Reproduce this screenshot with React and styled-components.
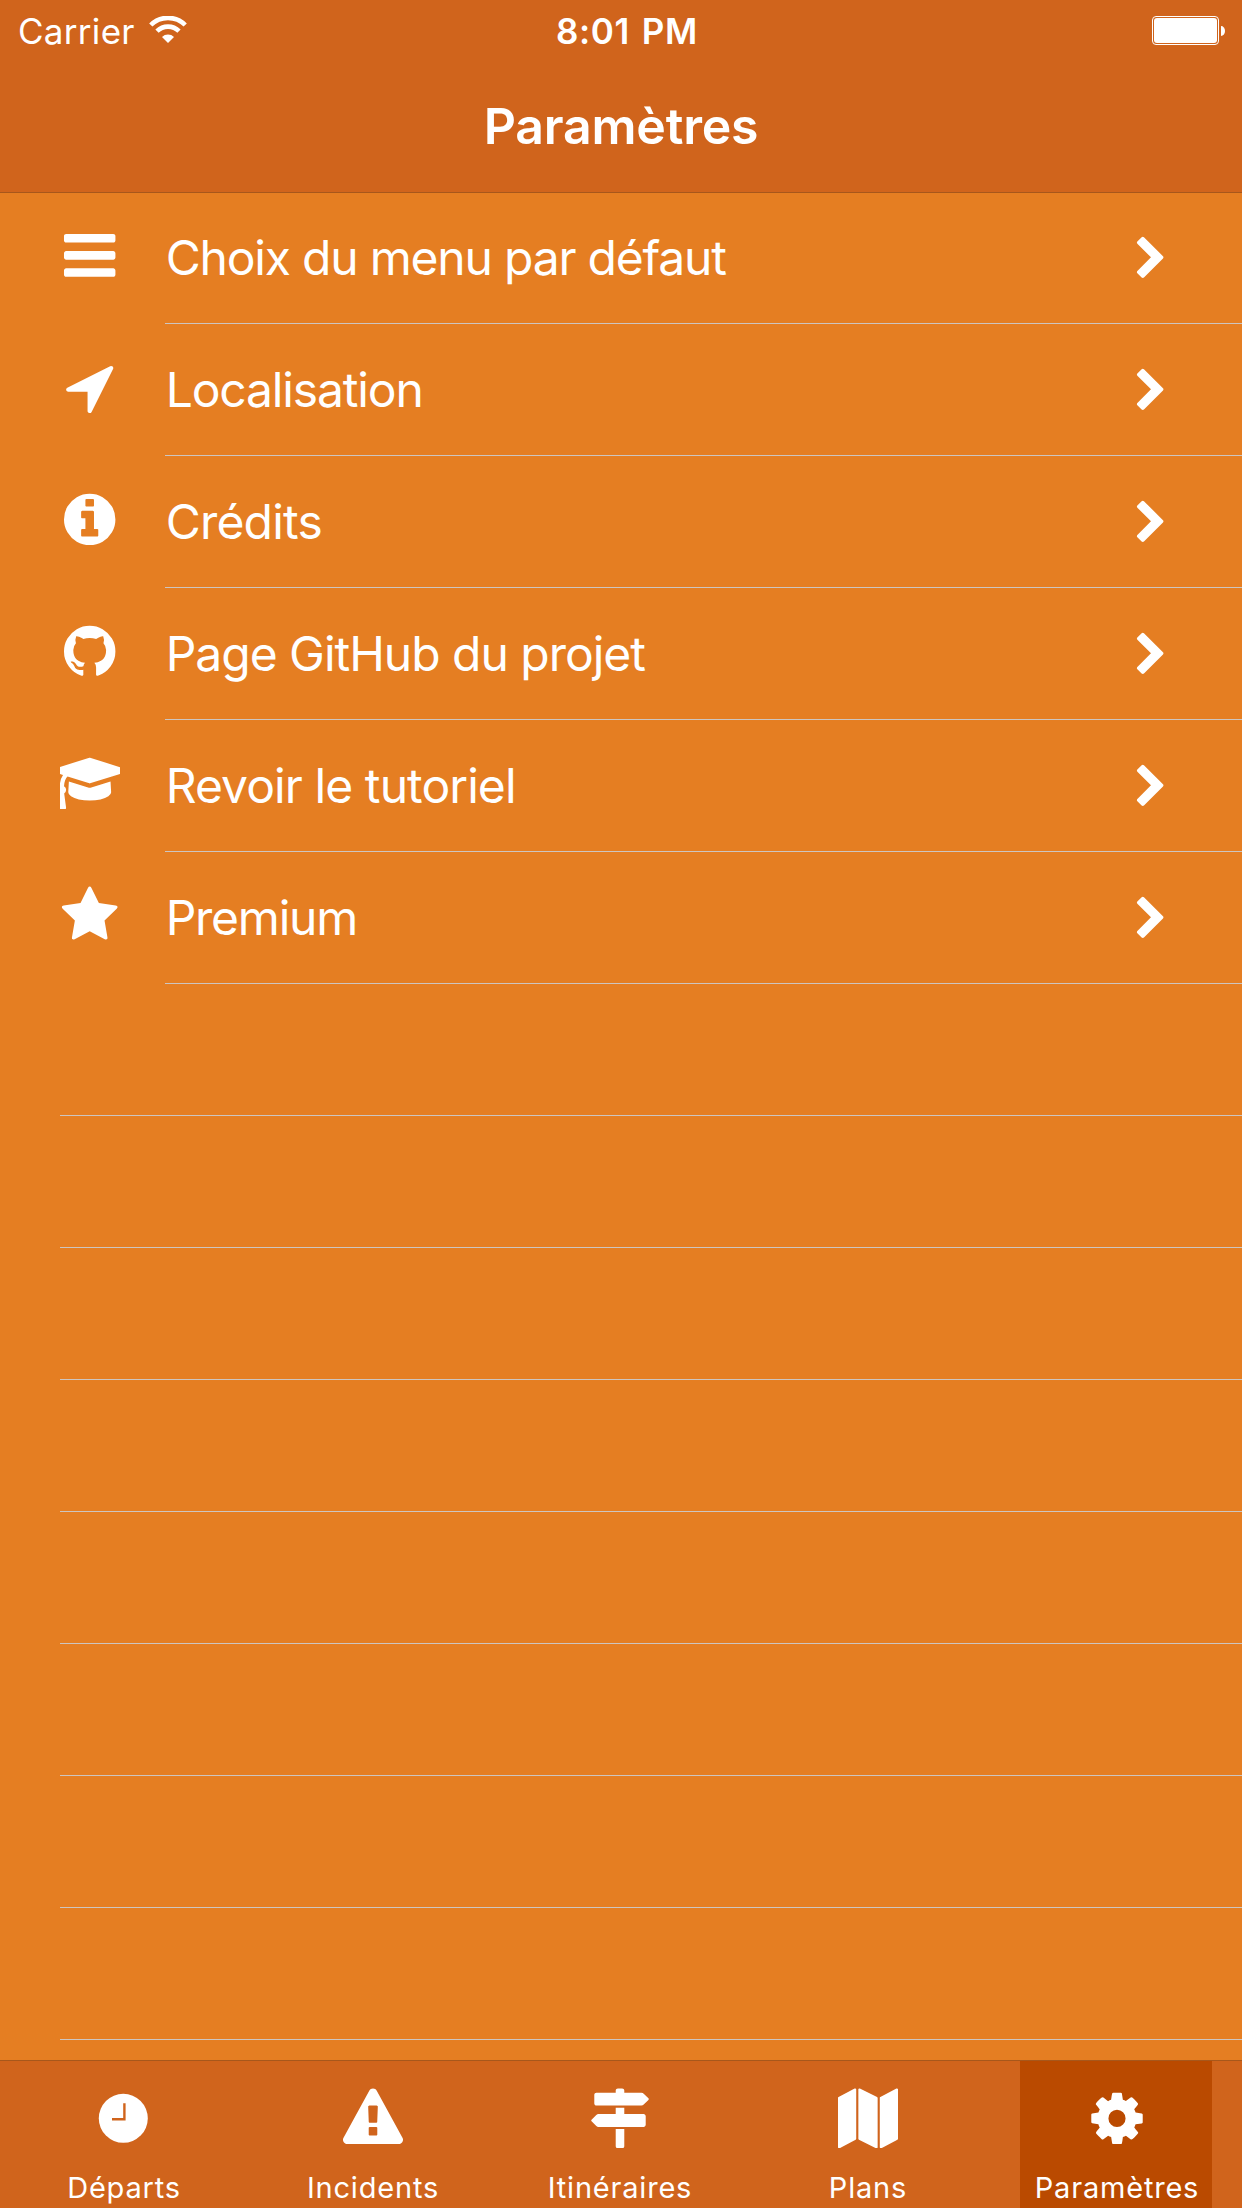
import React from "react";
import styled, { createGlobalStyle } from "styled-components";

const GlobalStyle = createGlobalStyle`
  * { box-sizing: border-box; }
  html, body { margin: 0; padding: 0; background: #e57e22; }
  body { overflow: hidden; }
`;

const Screen = styled.div`
  display: flex;
  flex-direction: column;
  width: 1242px;
  height: 2208px;
  overflow: hidden;
  background: #e57e22;
  color: #fff;
  font-family: Inter, "Liberation Sans", sans-serif;
  white-space: nowrap;
`;

const Header = styled.header`
  flex: none;
  height: 193px;
  background: #d0641c;
  border-bottom: 1px solid #a7571b;
`;

const StatusBar = styled.div`
  display: grid;
  grid-template-columns: 1fr auto 1fr;
  align-items: center;
  height: 60px;
  padding: 2px 17px 0 18px;
`;

const Network = styled.div`
  display: flex;
  align-items: center;
  gap: 14.5px;
  font-size: 35px;
  letter-spacing: 0.3px;

  svg {
    margin-top: -3px;
  }
`;

const Time = styled.div`
  padding-left: 11px;
  font-size: 35px;
  font-weight: 600;
  letter-spacing: 0.6px;
  word-spacing: 2.5px;
`;

const Battery = styled.div`
  display: flex;
  align-items: center;
  align-self: start;
  justify-content: flex-end;
  gap: 2px;
  margin-top: 14px;
`;

const BatteryShell = styled.div`
  width: 67px;
  height: 29px;
  padding: 1px;
  border: 1px solid #fff;
  border-radius: 4px;
`;

const BatteryLevel = styled.div`
  height: 100%;
  background: #fff;
  border-radius: 3px;
`;

const BatteryTip = styled.div`
  width: 4px;
  height: 10px;
  background: #fff;
  border-radius: 0 4px 4px 0 / 0 5px 5px 0;
`;

const Title = styled.h1`
  display: flex;
  align-items: center;
  justify-content: center;
  height: 132px;
  margin: 0;
  padding-left: 0;
  font-size: 50px;
  font-weight: 600;
  letter-spacing: -0.2px;
`;

const List = styled.main`
  flex: 1;
  min-height: 0;
  margin-top: -1px;
  padding-left: 60px;
  overflow: hidden;
  clip-path: inset(1px 0 0 0);
`;

const Row = styled.div`
  display: flex;
  height: 132px;
`;

const RowIcon = styled.div`
  flex: none;
  width: 105px;
  padding-top: 33px;
  line-height: 0;
`;

const RowBody = styled.div`
  flex: 1;
  display: flex;
  align-items: center;
  justify-content: space-between;
  padding-right: 68px;
  border-bottom: 1px solid #cdc5c0;

  svg {
    margin-top: 3px;
  }
`;

const RowLabel = styled.span`
  padding-left: 0.7px;
  font-size: 48px;
  letter-spacing: ${(p) => p.$spacing}px;
`;

const EmptyRow = styled.div`
  height: 132px;
  border-bottom: 1px solid #cdc5c0;
`;

const TabBar = styled.nav`
  flex: none;
  display: flex;
  gap: 56px;
  height: 148px;
  padding-left: 28px;
  background: #d0641c;
  border-top: 1px solid #a7571b;
`;

const Tab = styled.div`
  display: flex;
  flex-direction: column;
  align-items: center;
  width: 192px;
  padding-top: 27px;
  background: ${(p) => (p.$active ? "#ba4a00" : "transparent")};

  svg {
    flex: none;
    margin-left: ${(p) => p.$shift || 0}px;
  }
`;

const TabLabel = styled.span`
  margin-top: 22px;
  padding-left: ${(p) => p.$shift || 0}px;
  font-size: 29px;
  line-height: 36px;
  letter-spacing: ${(p) => p.$spacing}px;
`;

const PATHS = {
  bars: "M1664 1344v128q0 26-19 45t-45 19h-1408q-26 0-45-19t-19-45v-128q0-26 19-45t45-19h1408q26 0 45 19t19 45zm0-512v128q0 26-19 45t-45 19h-1408q-26 0-45-19t-19-45v-128q0-26 19-45t45-19h1408q26 0 45 19t19 45zm0-512v128q0 26-19 45t-45 19h-1408q-26 0-45-19t-19-45v-128q0-26 19-45t45-19h1408q26 0 45 19t19 45z",
  arrow: "M1593 349l-640 1280q-17 35-57 35-5 0-15-2-22-5-35.5-22.5t-13.5-39.5v-576h-576q-22 0-39.5-13.5t-22.5-35.5 4-42 29-30l1280-640q13-7 29-7 27 0 45 19 15 14 18.5 34.5t-6.5 39.5z",
  info: "M1152 1376v-160q0-14-9-23t-23-9h-96v-512q0-14-9-23t-23-9h-320q-14 0-23 9t-9 23v160q0 14 9 23t23 9h96v320h-96q-14 0-23 9t-9 23v160q0 14 9 23t23 9h448q14 0 23-9t9-23zm-128-896v-160q0-14-9-23t-23-9h-192q-14 0-23 9t-9 23v160q0 14 9 23t23 9h192q14 0 23-9t9-23zm640 416q0 209-103 385.5t-279.5 279.5-385.5 103-385.5-103-279.5-279.5-103-385.5 103-385.5 279.5-279.5 385.5-103 385.5 103 279.5 279.5 103 385.5z",
  github: "M896 128q209 0 385.5 103t279.5 279.5 103 385.5q0 251-146.5 451.5t-378.5 277.5q-27 5-40-7t-13-30q0-3 .5-76.5t.5-134.5q0-97-52-142 57-6 102.5-18t94-39 81-66.5 53-105 20.5-150.5q0-119-79-206 37-91-8-204-28-9-81 11t-92 44l-38 24q-93-26-192-26t-192 26q-16-11-42.5-27t-83.5-38.5-85-13.5q-45 113-8 204-79 87-79 206 0 85 20.5 150t52.5 105 80.5 67 94 39 102.5 18q-39 36-49 103-21 10-45 15t-57 5-65.5-21.5-55.5-62.5q-19-32-48.5-52t-49.5-24l-20-3q-21 0-29 4.5t-5 11.5 9 14 13 12l7 5q22 10 43.5 38t31.5 51l10 23q13 38 44 61.5t67 30 69.5 7 55.5-3.5l23-4q0 38 .5 88.5t.5 54.5q0 18-13 30t-40 7q-232-77-378.5-277.5t-146.5-451.5q0-209 103-385.5t279.5-279.5 385.5-103z",
  cap: "M1774 836l18 316q4 69-82 128t-235 93.5-323 34.5-323-34.5-235-93.5-82-128l18-316 574 181q22 7 48 7t48-7zm530-324q0 23-22 31l-1120 352q-4 1-10 1t-10-1l-652-206q-43 34-71 111.5t-34 178.5q63 36 63 109 0 69-58 107l58 433q2 14-8 25-9 11-24 11h-192q-15 0-24-11-10-11-8-25l58-433q-58-38-58-107 0-73 65-111 11-207 98-330l-333-104q-22-8-22-31t22-31l1120-352q4-1 10-1t10 1l1120 352q22 8 22 31z",
  star: "M1728 647q0 22-26 48l-363 354 86 500q1 7 1 20 0 21-10.5 35.5t-30.5 14.5q-19 0-40-12l-449-236-449 236q-22 12-40 12-21 0-31.5-14.5t-10.5-35.5q0-6 2-20l86-500-364-354q-25-27-25-48 0-37 56-46l502-73 225-455q19-41 49-41t49 41l225 455 502 73q56 9 56 46z",
  chevron: "M1363 877l-742 742q-19 19-45 19t-45-19l-166-166q-19-19-19-45t19-45l531-531-531-531q-19-19-19-45t19-45l166-166q19-19 45-19t45 19l742 742q19 19 19 45t-19 45z",
  warning: "M1024 1375v-190q0-14-9.5-23.5t-22.5-9.5h-192q-13 0-22.5 9.5t-9.5 23.5v190q0 14 9.5 23.5t22.5 9.5h192q13 0 22.5-9.5t9.5-23.5zm-2-374l18-459q0-12-10-19-13-11-24-11h-220q-11 0-24 11-10 7-10 21l17 457q0 10 10 16.5t24 6.5h185q14 0 23.5-6.5t10.5-16.5zm-14-934l768 1408q35 63-2 126-17 29-46.5 46t-63.5 17h-1536q-34 0-63.5-17t-46.5-46q-37-63-2-126l768-1408q17-31 47-49t65-18 65 18 47 49z",
  signs: "M1745 297q10 10 10 23t-10 23l-141 141q-28 28-68 28h-1344q-26 0-45-19t-19-45v-256q0-26 19-45t45-19h576v-64q0-26 19-45t45-19h128q26 0 45 19t19 45v64h512q40 0 68 28zm-977 919h256v512q0 26-19 45t-45 19h-128q-26 0-45-19t-19-45v-512zm832-448q26 0 45 19t19 45v256q0 26-19 45t-45 19h-1344q-40 0-68-28l-141-141q-10-10-10-23t10-23l141-141q28-28 68-28h512v-192h256v192h576z",
  map: "M512 0q13 0 22.5 9.5t9.5 22.5v1472q0 20-17 28l-480 256q-7 4-15 4-13 0-22.5-9.5t-9.5-22.5v-1472q0-20 17-28l480-256q7-4 15-4zm1248 0q13 0 22.5 9.5t9.5 22.5v1472q0 20-17 28l-480 256q-7 4-15 4-13 0-22.5-9.5t-9.5-22.5v-1472q0-20 17-28l480-256q7-4 15-4zm-1120 0q8 0 14 3l512 256q18 10 18 29v1472q0 13-9.5 22.5t-22.5 9.5q-8 0-14-3l-512-256q-18-10-18-29v-1472q0-13 9.5-22.5t22.5-9.5z",
  cog: "M1152 896q0-106-75-181t-181-75-181 75-75 181 75 181 181 75 181-75 75-181zm512-109v222q0 12-8 23t-20 13l-185 28q-19 54-39 91 35 50 107 138 10 12 10 25t-9 23q-27 37-99 108t-94 71q-12 0-26-9l-138-108q-44 23-91 38-16 136-29 186-7 28-36 28h-222q-14 0-24.5-8.5t-11.5-21.5l-28-184q-49-16-90-37l-141 107q-10 9-25 9-14 0-25-11-126-114-165-168-7-10-7-23 0-12 8-23 15-21 51-66.5t54-70.5q-27-50-41-99l-183-27q-13-2-21-12.5t-8-23.5v-222q0-12 8-23t19-13l186-28q14-46 39-92-40-57-107-138-10-12-10-24 0-10 9-23 26-36 98.5-107.5t94.5-71.5q13 0 26 10l138 107q44-23 91-38 16-136 29-186 7-28 36-28h222q14 0 24.5 8.5t11.5 21.5l28 184q49 16 90 37l142-107q9-9 24-9 13 0 25 10 129 119 165 170 7 8 7 22 0 12-8 23-15 21-51 66.5t-54 70.5q26 50 41 98l183 28q13 2 21 12.5t8 23.5z",
};

function Glyph({ name, size = 60, x = 0, y = -12 }) {
  const left = name === "cap" ? x + 256 : x;
  return (
    <svg
      width={size}
      height={size}
      viewBox={`${left} ${y} 1792 1792`}
      fill="#fff"
    >
      <path d={PATHS[name]} />
    </svg>
  );
}

function ClockIcon() {
  return (
    <svg width="60" height="60" viewBox="0 0 60 60">
      <circle cx="29.3" cy="30.3" r="24.5" fill="#fff" />
      <path d="M30.4 15.3v16H18" fill="none" stroke="#d0641c" strokeWidth="2.4" />
    </svg>
  );
}

function WifiIcon() {
  return (
    <svg width="38" height="28" viewBox="0 0 38 28">
      <g fill="none" stroke="#fff" strokeWidth="4.6">
        <path d="M1.8 9A24.3 24.3 0 0 1 36.2 9" />
        <path d="M8 15.2A15.5 15.5 0 0 1 30 15.2" />
      </g>
      <path d="M13 21A8.5 8.5 0 0 1 25 21L19 27Z" fill="#fff" />
    </svg>
  );
}

const ROWS = [
  { icon: "bars", label: "Choix du menu par défaut", spacing: -1.2 },
  { icon: "arrow", label: "Localisation", spacing: -1.15 },
  { icon: "info", label: "Crédits", spacing: -0.8 },
  { icon: "github", label: "Page GitHub du projet", spacing: -1.02 },
  { icon: "cap", label: "Revoir le tutoriel", spacing: -0.92 },
  { icon: "star", label: "Premium", spacing: -1.25 },
];

const TABS = [
  { icon: "clock", label: "Départs", spacing: 0.8 },
  { icon: "warning", label: "Incidents", spacing: 0.8, shift: 2 },
  { icon: "signs", label: "Itinéraires", spacing: 0.8 },
  { icon: "map", label: "Plans", spacing: 0.8 },
  { icon: "cog", label: "Paramètres", spacing: 0.8, shift: 2, active: true },
];

const EMPTY_ROWS = 8;

export default function App() {
  return (
    <>
      <GlobalStyle />
      <Screen>
        <Header>
          <StatusBar>
            <Network>
              Carrier
              <WifiIcon />
            </Network>
            <Time>8:01 PM</Time>
            <Battery>
              <BatteryShell>
                <BatteryLevel />
              </BatteryShell>
              <BatteryTip />
            </Battery>
          </StatusBar>
          <Title>Paramètres</Title>
        </Header>
        <List>
          {ROWS.map((row) => (
            <Row key={row.label}>
              <RowIcon>
                <Glyph name={row.icon} x={9} />
              </RowIcon>
              <RowBody>
                <RowLabel $spacing={row.spacing}>{row.label}</RowLabel>
                <Glyph name="chevron" size={46} y={0} />
              </RowBody>
            </Row>
          ))}
          {Array.from({ length: EMPTY_ROWS }, (_, i) => (
            <EmptyRow key={i} />
          ))}
        </List>
        <TabBar>
          {TABS.map((tab) => (
            <Tab key={tab.label} $active={tab.active} $shift={tab.shift}>
              {tab.icon === "clock" ? <ClockIcon /> : <Glyph name={tab.icon} />}
              <TabLabel $spacing={tab.spacing} $shift={tab.shift}>
                {tab.label}
              </TabLabel>
            </Tab>
          ))}
        </TabBar>
      </Screen>
    </>
  );
}
